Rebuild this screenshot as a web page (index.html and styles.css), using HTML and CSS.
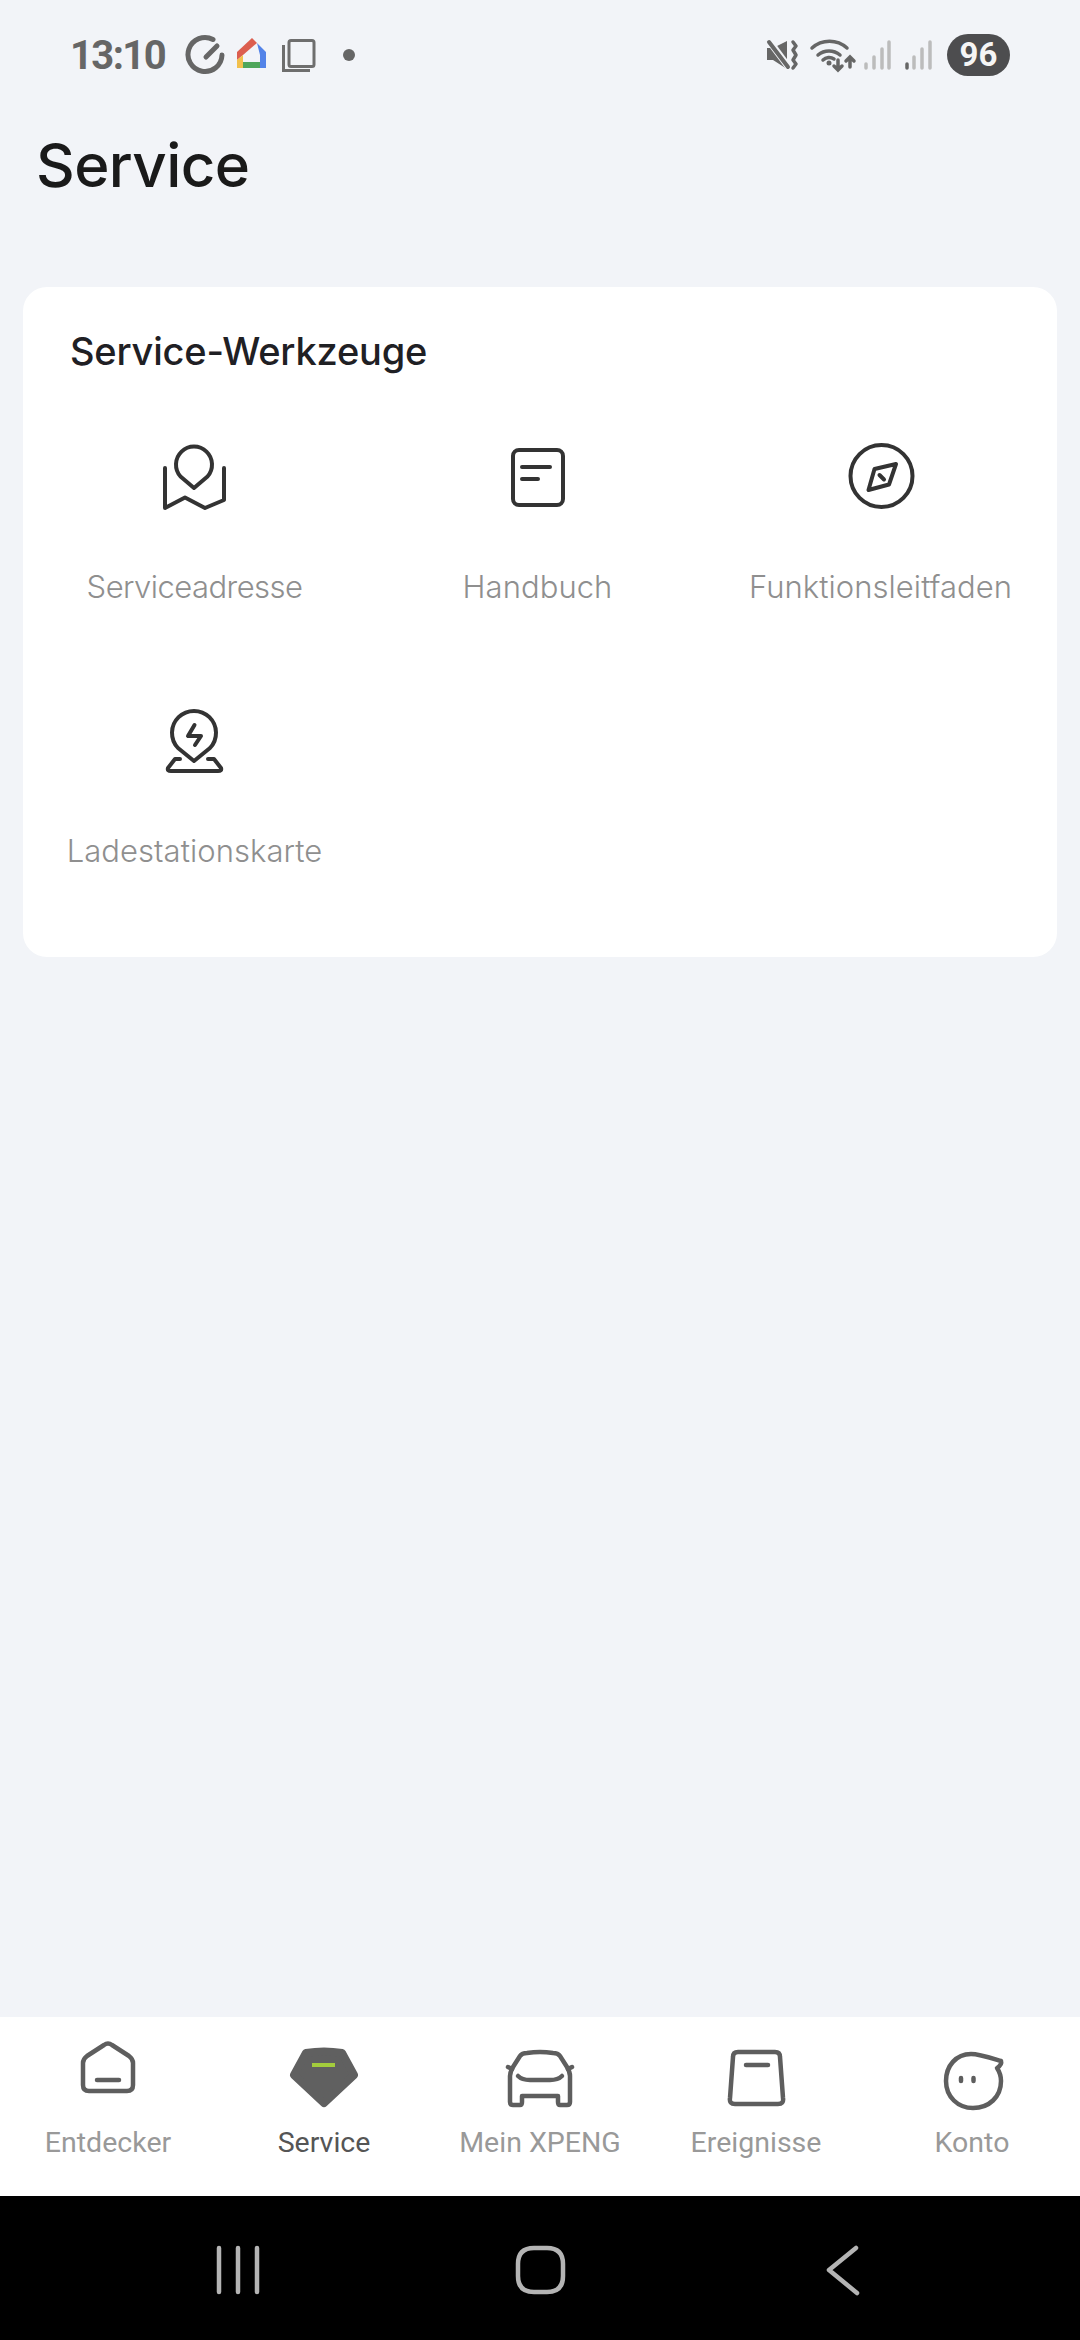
FILE: index.html
```html
<!DOCTYPE html>
<html lang="de">
<head>
<meta charset="utf-8">
<title>Service</title>
<link rel="stylesheet" href="styles.css">
</head>
<body>
<div class="app">
  <header class="status">
    <div class="status-left">
      <span class="time">13:10</span>
      <svg class="status-icons-left" viewBox="185 34 172 42" width="172" height="42">
        <g fill="none" stroke="#666" stroke-width="5" stroke-linecap="round">
          <path d="M213 39.500A17 17 0 1 0 222 55"/>
          <path d="M206 57L217 46"/>
        </g>
        <polygon fill="#dc5e4f" points="237,52 252,38 257,43 243,55 237,60"/>
        <polygon fill="#5383e8" points="252,38 266,52 266,68 260,68 260,55 257,43"/>
        <polygon fill="#f2c04c" points="237,60 243,55 243,68 237,68"/>
        <polygon fill="#4fa65b" points="243,62 260,62 260,68 243,68"/>
        <g fill="none" stroke="#6e6e6e" stroke-width="3">
          <rect x="289" y="40.500" width="25" height="26" rx="2"/>
          <path d="M283.500 45V70.500H310"/>
        </g>
        <circle cx="349" cy="55" r="6" fill="#666"/>
      </svg>
    </div>
    <div class="status-right">
      <svg class="status-icons-right" viewBox="765 34 170 42" width="170" height="42">
        <path fill="#666" d="M767 48H773L787 41V69L773 60H767Z"/>
        <path stroke="#f2f4f8" stroke-width="7" d="M767 38L790 69"/>
        <path fill="none" stroke="#666" stroke-width="4" stroke-linecap="round" d="M769 42L788 67"/>
        <path fill="none" stroke="#666" stroke-width="3.500" stroke-linecap="round" stroke-linejoin="round" d="M793 42L796 46L793 50L796 55L793 60L796 64L793 68"/>
        <g fill="none" stroke="#666" stroke-width="3.500" stroke-linecap="round">
          <path d="M812 48A26 26 0 0 1 847 48"/>
          <path d="M818 55A17 17 0 0 1 840 55"/>
          <path d="M823 60A9 9 0 0 1 834 59"/>
          <path d="M838 60V70M834 66L838 70L842 66"/>
          <path d="M850 67V57M846 61L850 57L854 61"/>
        </g>
        <circle cx="829" cy="63" r="2.500" fill="#666"/>
        <g fill="none" stroke="#bcbcbc" stroke-width="3.500" stroke-linecap="round">
          <path d="M866 64V68M874 57V68M882 49V68M889 42V68"/>
          <path d="M914 57V68M922 49V68M930 42V68"/>
        </g>
        <path fill="none" stroke="#666" stroke-width="3.500" stroke-linecap="round" d="M907 64V68"/>
      </svg>
      <span class="battery">96</span>
    </div>
  </header>

  <h1 class="page-title">Service</h1>

  <main class="content">
    <section class="card">
      <h2 class="card-title">Service-Werkzeuge</h2>
      <div class="tools">
        <div class="tool">
          <svg class="tool-icon" viewBox="160 442 70 72" width="70" height="72">
            <path d="M194 488L180.500 476.500A18 18 0 1 1 207.500 476.500Z"/>
            <path d="M165 468V508L185 497.500L205 508L224 500V468"/>
          </svg>
          <span class="tool-label tool-label-tight">Serviceadresse</span>
        </div>
        <div class="tool">
          <svg class="tool-icon" viewBox="502 442 70 72" width="70" height="72">
            <rect x="512" y="450" width="50" height="55" rx="6"/>
            <path d="M521 467H549M521 479H537"/>
          </svg>
          <span class="tool-label">Handbuch</span>
        </div>
        <div class="tool">
          <svg class="tool-icon" viewBox="846 442 70 72" width="70" height="72">
            <circle cx="881.500" cy="476" r="31"/>
            <path d="M896 464L889 484.500L868.500 490L874.500 469Z"/>
            <path d="M879.500 475L884 479.500"/>
          </svg>
          <span class="tool-label">Funktionsleitfaden</span>
        </div>
        <div class="tool">
          <svg class="tool-icon" viewBox="160 706 70 72" width="70" height="72">
            <path d="M194 761L178 748A22 22 0 1 1 210 748Z"/>
            <path d="M194.500 725L188 736H201L195 745"/>
            <path d="M180 759H175L168 768Q167 771 171 771H218Q222 771 221 768L214 759H208"/>
          </svg>
          <span class="tool-label">Ladestationskarte</span>
        </div>
      </div>
    </section>
  </main>

  <nav class="tabbar">
    <div class="tab">
      <svg class="tab-icon" viewBox="58 2036 100 76" width="100" height="76">
        <path d="M104 2045Q108 2042 112 2045L129 2056Q133 2059 133 2063V2085Q133 2091 127 2091H89Q83 2091 83 2085V2063Q83 2059 87 2056Z"/>
        <path d="M97 2080H119"/>
      </svg>
      <span class="tab-label">Entdecker</span>
    </div>
    <div class="tab tab-active">
      <svg class="tab-icon" viewBox="274 2036 100 76" width="100" height="76">
        <path class="tab-fill" d="M306 2053Q324 2050 342 2053L354 2075L324 2103L294 2075Z"/>
        <path class="tab-accent" d="M312 2065H335"/>
      </svg>
      <span class="tab-label">Service</span>
    </div>
    <div class="tab">
      <svg class="tab-icon" viewBox="490 2036 100 76" width="100" height="76">
        <path d="M510 2076Q510 2072 513 2067L520 2056Q522 2053 527 2053Q540 2051 553 2053Q558 2053 560 2056L567 2067Q570 2072 570 2076V2102Q570 2105 567 2105H560Q558 2105 558 2102V2096H522V2102Q522 2105 520 2105H513Q510 2105 510 2102Z"/>
        <path d="M518 2076Q522 2080 530 2080H550Q558 2080 562 2076"/>
        <path d="M512 2069L508 2067M568 2069L572 2067"/>
      </svg>
      <span class="tab-label">Mein XPENG</span>
    </div>
    <div class="tab">
      <svg class="tab-icon" viewBox="706 2036 100 76" width="100" height="76">
        <path d="M738 2052H775Q780 2052 780 2057L783 2098Q784 2104 778 2104H735Q729 2104 730 2098L733 2057Q733 2052 738 2052Z"/>
        <path d="M746 2065H768"/>
      </svg>
      <span class="tab-label">Ereignisse</span>
    </div>
    <div class="tab">
      <svg class="tab-icon" viewBox="921 2036 100 76" width="100" height="76">
        <path d="M1000 2061C990 2058 978 2054 970 2054C955 2054 945 2066 945 2081C945 2097 957 2108 972 2108C988 2108 1000 2097 1000 2081C1000 2075 998 2071 996 2068C999 2066 1001 2064 1000 2061Z"/>
        <path d="M960 2078V2081M972.500 2078V2081"/>
      </svg>
      <span class="tab-label">Konto</span>
    </div>
  </nav>

  <footer class="navbar">
    <svg class="nav-icon" viewBox="208 2240 60 60" width="60" height="60">
      <path d="M219 2248V2292M238 2248V2292M257 2248V2292"/>
    </svg>
    <svg class="nav-icon" viewBox="510 2240 60 60" width="60" height="60">
      <path d="M534 2248H547Q563 2248 563 2264V2276Q563 2292 547 2292H534Q518 2292 518 2276V2264Q518 2248 534 2248Z"/>
    </svg>
    <svg class="nav-icon" viewBox="813 2240 60 60" width="60" height="60">
      <path d="M857 2248L830 2270L858 2293"/>
    </svg>
  </footer>
</div>
</body>
</html>
```
FILE: styles.css
```css
* { box-sizing: border-box; }
html, body { margin: 0; padding: 0; }
body { width: 1080px; height: 2340px; background: #f2f4f8; overflow: hidden; }

.app {
  height: 2340px;
  display: flex;
  flex-direction: column;
  font-family: "Inter", "Liberation Sans", sans-serif;
}

.status {
  height: 110px;
  padding: 0 70px 0 70px;
  display: flex;
  align-items: center;
  justify-content: space-between;
}
.status-left, .status-right { display: flex; align-items: center; }
.time {
  width: 115px;
  font-family: "Roboto", "Liberation Sans", sans-serif;
  font-size: 40px;
  font-weight: 700;
  letter-spacing: -1.6px;
  color: #666;
}
.status-right { gap: 12px; }
.battery {
  width: 63px;
  height: 42px;
  border-radius: 21px;
  background: #4d4d4f;
  color: #f5f5f5;
  font-family: "Roboto", "Liberation Sans", sans-serif;
  font-size: 33px;
  font-weight: 700;
  line-height: 42px;
  text-align: center;
}

.page-title {
  margin: 18px 0 85px 36px;
  font-size: 60px;
  line-height: 74px;
  font-weight: 500;
  letter-spacing: -0.6px;
  color: #1a1a1a;
}

.content { flex: 1; padding: 0 23px; }
.card {
  height: 670px;
  padding-top: 41px;
  background: #fff;
  border-radius: 24px;
}
.card-title {
  margin: 0 0 68px 47px;
  font-size: 38px;
  line-height: 46px;
  font-weight: 500;
  letter-spacing: -0.2px;
  color: #1f2024;
}
.tools {
  display: grid;
  grid-template-columns: repeat(3, 343px);
  row-gap: 99px;
}
.tool { display: flex; flex-direction: column; align-items: center; }
.tool-icon {
  fill: none;
  stroke: #333;
  stroke-width: 4;
  stroke-linecap: round;
  stroke-linejoin: round;
}
.tool-label {
  margin-top: 53px;
  font-size: 31px;
  line-height: 40px;
  font-weight: 300;
  letter-spacing: 0.05px;
  color: #8f8f8f;
  white-space: nowrap;
}
.tool-label-tight { letter-spacing: -0.55px; }

.tabbar {
  height: 179px;
  padding-top: 19px;
  background: #fff;
  display: grid;
  grid-template-columns: repeat(5, 216px);
}
.tab { display: flex; flex-direction: column; align-items: center; }
.tab-icon {
  fill: none;
  stroke: #5e5e5e;
  stroke-width: 4.5;
  stroke-linecap: round;
  stroke-linejoin: round;
}
.tab-fill { fill: #606060; stroke: #606060; stroke-width: 8; }
.tab-accent { stroke: #a3cc3c; stroke-width: 4; stroke-linecap: butt; }
.tab-label {
  margin-top: 13px;
  font-family: "Roboto", "Liberation Sans", sans-serif;
  font-size: 28.5px;
  line-height: 36px;
  color: #999;
  white-space: nowrap;
}
.tab-active .tab-label { color: #555; }

.navbar {
  height: 144px;
  padding-top: 4px;
  background: #000;
  display: flex;
  justify-content: center;
  align-items: center;
  gap: 242px;
}
.nav-icon {
  fill: none;
  stroke: #b4b4b4;
  stroke-width: 4.5;
  stroke-linecap: round;
  stroke-linejoin: round;
}
```
